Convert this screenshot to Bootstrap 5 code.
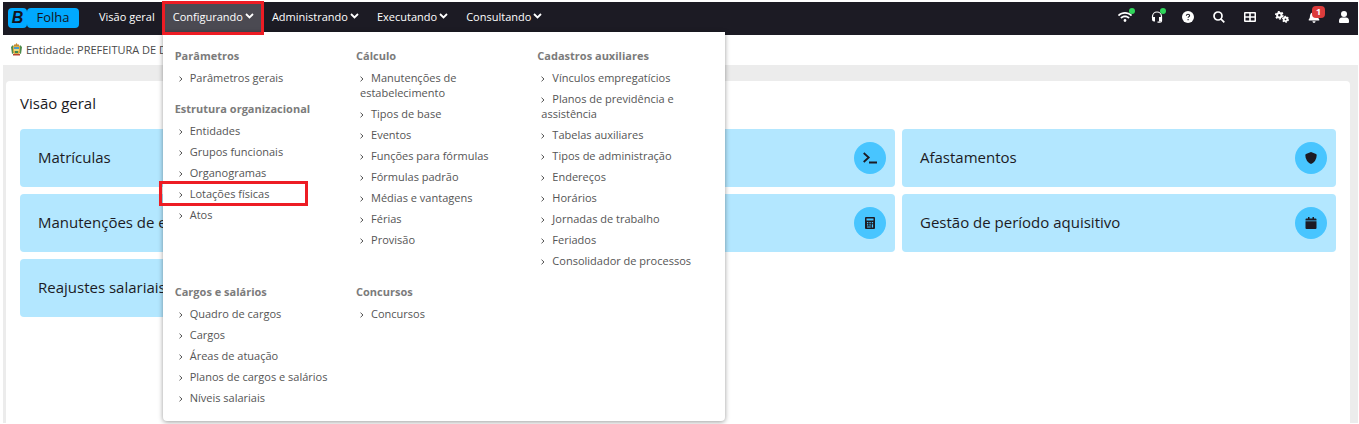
<!DOCTYPE html>
<html lang="pt-BR">
<head>
<meta charset="utf-8">
<meta name="viewport" content="width=device-width, initial-scale=1">
<title>Folha - Visão geral</title>
<link href="https://cdn.jsdelivr.net/npm/bootstrap@5.3.0/dist/css/bootstrap.min.css" rel="stylesheet">
<style>
  body { font-family: "Open Sans", "Noto Sans", sans-serif; font-size: 11px; line-height: 15px; color: #4a4a4a; padding: 2px 1px 1px 3px; background: #fff; }
  a { color: inherit; text-decoration: none; }
  button { font: inherit; }
  svg { display: block; fill: currentColor; }
  .topbar { background: #1c1b24; color: #fff; height: 33px; padding: 0 9px 0 5px; }
  .brand { padding-top: 6px; }
  .brand-b, .brand-name { background: #00a9ff; color: #14141c; height: 20px; border-radius: 4px; }
  .brand-b { width: 19px; font: italic bold 16px/19px "Liberation Sans", sans-serif; }
  .brand-name { width: 52px; font-size: 13px; line-height: 19px; }
  .topmenu { margin-left: 11px; }
  .topmenu .nav-link { color: #fff; padding: 0 9px 2px; height: 30px; border: 0; background: none; display: flex; align-items: center; gap: 2px; }
  .topmenu .nav-link.open { background: #4b4a52; }
  .marked { position: relative; }
  .marked::after { content: ""; position: absolute; inset: -1px -1px -3px -2px; border: 3px solid #ed1c24; z-index: 1100; pointer-events: none; }
  .marked.row-mark::after { inset: -2px auto -2px -20px; width: 149px; }
  .mega { position: absolute; top: 30px; left: -1px; width: 562px; z-index: 1050; background: #fff; border-radius: 0 0 4px 4px; box-shadow: 0 1px 5px rgba(0,0,0,.4); padding: 14px 6px 2px 12px; color: #555; }
  .mega-grid { display: grid; grid-template-columns: repeat(3, 1fr); }
  .mega h2 { font-size: 11px; line-height: 19px; font-weight: 700; color: #7b7b7b; margin: 0 0 2px; }
  .mega ul { margin: 0 0 11px; padding: 0 8px 0 4px; list-style: none; }
  .mega li { padding: 3px 0; }
  .mega li svg { display: inline-block; width: 4px; height: 6px; margin-right: 7px; fill: none; stroke: #555; vertical-align: 0; }
  .tools { gap: 19px; height: 30px; }
  .tools button { position: relative; border: 0; padding: 0; background: none; color: #fff; }
  .online { position: absolute; width: 6px; height: 6px; border-radius: 50%; background: #2fd65a; top: -3px; right: -3px; }
  .count { position: absolute; top: -5px; left: 4px; width: 13px; height: 12px; border-radius: 4px; background: #dc3c3c; font-size: 9px; line-height: 12px; font-weight: 700; }
  .entity { height: 30px; padding: 0 8px 2px; gap: 4px; }
  .stage { background: #ececec; padding: 16px 8px 0 3px; }
  .panel { background: #fff; border-radius: 4px 4px 0 0; padding: 11px 14px; }
  .panel h1 { font-size: 15px; line-height: 22px; color: #1c1b24; margin: 0 0 15px; }
  .tiles { display: grid; grid-template-columns: repeat(3, 1fr); gap: 7px; }
  .tile { background: #b3e7ff; border-radius: 4px; height: 58px; padding: 0 9px 0 18px; font-size: 15px; line-height: 22px; color: #1c1b24; }
  .tile-name { padding-bottom: 2px; }
  .disc { width: 32px; height: 32px; border-radius: 50%; background: #48c5ff; }
</style>
</head>
<body class="d-flex flex-column min-vh-100">
<svg class="d-none"><defs>
  <symbol id="chev" viewBox="0 0 9 6"><path d="M1 1l3.500 3.500L8 1" fill="none" stroke="#fff" stroke-width="1.800"/></symbol>
  <symbol id="arr" viewBox="0 0 4 6"><path d="M.5 .7L3 3 .5 5.300"/></symbol>
</defs></svg>
<header class="topbar d-flex align-items-start">
  <a href="#" class="brand d-flex text-center"><span class="brand-b">B</span><span class="brand-name">Folha</span></a>
  <nav class="topmenu d-flex">
    <a class="nav-link" href="#">Visão geral</a>
    <div class="marked">
      <button class="nav-link open" type="button" aria-expanded="true">Configurando <svg width="9" height="6"><use href="#chev"/></svg></button>
      <div class="mega"><div class="mega-grid">
        <div>
          <h2>Parâmetros</h2>
          <ul><li><a href="#"><svg><use href="#arr"/></svg>Parâmetros gerais</a></li></ul>
          <h2>Estrutura organizacional</h2>
          <ul>
            <li><a href="#"><svg><use href="#arr"/></svg>Entidades</a></li>
            <li><a href="#"><svg><use href="#arr"/></svg>Grupos funcionais</a></li>
            <li><a href="#"><svg><use href="#arr"/></svg>Organogramas</a></li>
            <li class="marked row-mark"><a href="#"><svg><use href="#arr"/></svg>Lotações físicas</a></li>
            <li><a href="#"><svg><use href="#arr"/></svg>Atos</a></li>
          </ul>
        </div>
        <div>
          <h2>Cálculo</h2>
          <ul>
            <li><a href="#"><svg><use href="#arr"/></svg>Manutenções de estabelecimento</a></li>
            <li><a href="#"><svg><use href="#arr"/></svg>Tipos de base</a></li>
            <li><a href="#"><svg><use href="#arr"/></svg>Eventos</a></li>
            <li><a href="#"><svg><use href="#arr"/></svg>Funções para fórmulas</a></li>
            <li><a href="#"><svg><use href="#arr"/></svg>Fórmulas padrão</a></li>
            <li><a href="#"><svg><use href="#arr"/></svg>Médias e vantagens</a></li>
            <li><a href="#"><svg><use href="#arr"/></svg>Férias</a></li>
            <li><a href="#"><svg><use href="#arr"/></svg>Provisão</a></li>
          </ul>
        </div>
        <div>
          <h2>Cadastros auxiliares</h2>
          <ul>
            <li><a href="#"><svg><use href="#arr"/></svg>Vínculos empregatícios</a></li>
            <li><a href="#"><svg><use href="#arr"/></svg>Planos de previdência e assistência</a></li>
            <li><a href="#"><svg><use href="#arr"/></svg>Tabelas auxiliares</a></li>
            <li><a href="#"><svg><use href="#arr"/></svg>Tipos de administração</a></li>
            <li><a href="#"><svg><use href="#arr"/></svg>Endereços</a></li>
            <li><a href="#"><svg><use href="#arr"/></svg>Horários</a></li>
            <li><a href="#"><svg><use href="#arr"/></svg>Jornadas de trabalho</a></li>
            <li><a href="#"><svg><use href="#arr"/></svg>Feriados</a></li>
            <li><a href="#"><svg><use href="#arr"/></svg>Consolidador de processos</a></li>
          </ul>
        </div>
        <div>
          <h2>Cargos e salários</h2>
          <ul>
            <li><a href="#"><svg><use href="#arr"/></svg>Quadro de cargos</a></li>
            <li><a href="#"><svg><use href="#arr"/></svg>Cargos</a></li>
            <li><a href="#"><svg><use href="#arr"/></svg>Áreas de atuação</a></li>
            <li><a href="#"><svg><use href="#arr"/></svg>Planos de cargos e salários</a></li>
            <li><a href="#"><svg><use href="#arr"/></svg>Níveis salariais</a></li>
          </ul>
        </div>
        <div>
          <h2>Concursos</h2>
          <ul><li><a href="#"><svg><use href="#arr"/></svg>Concursos</a></li></ul>
        </div>
      </div></div>
    </div>
    <button class="nav-link" type="button">Administrando <svg width="9" height="6"><use href="#chev"/></svg></button>
    <button class="nav-link" type="button">Executando <svg width="9" height="6"><use href="#chev"/></svg></button>
    <button class="nav-link" type="button">Consultando <svg width="9" height="6"><use href="#chev"/></svg></button>
  </nav>
  <div class="tools d-flex align-items-center ms-auto">
    <button type="button" aria-label="Conexão"><svg width="14" height="12" viewBox="0 0 640 512"><path d="M634.910 154.880C457.740-8.990 182.190-8.930 5.090 154.880c-6.660 6.160-6.790 16.590-.35 22.980l34.240 33.970c6.140 6.100 16.020 6.230 22.400.38 145.920-133.680 371.300-133.710 517.250 0 6.380 5.850 16.260 5.710 22.400-.38l34.240-33.970c6.430-6.390 6.300-16.820-.36-22.980zM320 352c-35.350 0-64 28.650-64 64s28.650 64 64 64 64-28.650 64-64-28.650-64-64-64zm202.670-83.590c-115.260-101.930-290.210-101.820-405.340 0-6.900 6.100-7.120 16.690-.57 23.150l34.440 33.990c6 5.920 15.660 6.320 22.050.8 83.950-72.570 209.740-72.410 293.490 0 6.390 5.520 16.050 5.130 22.050-.8l34.440-33.990c6.560-6.460 6.330-17.060-.56-23.150z"/></svg><span class="online"></span></button>
    <button type="button" aria-label="Suporte"><svg width="12" height="12" viewBox="0 0 12 12"><path d="M1.500 7V5.500a4.500 4.500 0 019 0V10q0 1.200-1.500 1.200H6.500" fill="none" stroke="#fff" stroke-width="1.200"/><path d="M2 6h2v4.500H3Q1 10.500 1 8.500V7q0-1 1-1zM8 6h2q1 0 1 1v1.500q0 2-2 2H8z"/></svg><span class="online"></span></button>
    <button type="button" aria-label="Ajuda"><svg width="12" height="12" viewBox="0 0 12 12"><circle cx="6" cy="6" r="6"/><path d="M4.300 4.700q.2-1.500 1.700-1.500 1.600 0 1.600 1.300 0 .7-.8 1.200-.7.400-.7 1M6.100 8v1.300" fill="none" stroke="#1c1b24" stroke-width="1.100"/></svg></button>
    <button type="button" aria-label="Pesquisar"><svg width="12" height="12" viewBox="0 0 12 12"><path d="M7.800 7.800l3.500 3.500M9 5A4 4 0 111 5a4 4 0 018 0z" fill="none" stroke="#fff" stroke-width="1.700"/></svg></button>
    <button type="button" aria-label="Aplicações"><svg width="12" height="12" viewBox="0 0 12 12"><path fill-rule="evenodd" d="M1 1h10q1 0 1 1v8q0 1-1 1H1q-1 0-1-1V2q0-1 1-1zM1.500 2.500v2.700h3.700V2.500zm5.300 0v2.700h3.700V2.500zM1.500 6.800v2.700h3.700V6.800zm5.300 0v2.700h3.700V6.800z"/></svg></button>
    <button type="button" aria-label="Configurações"><svg width="14" height="12" viewBox="0 0 14 12"><g fill="none" stroke="#fff"><circle cx="4.300" cy="4.300" r="2.200" stroke-width="2"/><circle cx="4.300" cy="4.300" r="3.600" stroke-width="1.500" stroke-dasharray="1.900 1.870"/><circle cx="10.500" cy="8.300" r="1.800" stroke-width="1.800"/><circle cx="10.500" cy="8.300" r="2.900" stroke-width="1.200" stroke-dasharray="1.600 1.436"/></g></svg></button>
    <button type="button" aria-label="Notificações"><svg width="12" height="12" viewBox="0 0 12 12"><path d="M6 0q.8 0 .8 1Q10 2 10 5q0 2.500 1.300 3.600.4.900-.5.900H1.200Q.3 9.500.7 8.600 2 7.500 2 5q0-3 3.200-4 0-1 .8-1zM4.400 10.300h3.200q-.2 1.600-1.600 1.600t-1.600-1.600z"/></svg><span class="count">1</span></button>
    <button type="button" aria-label="Usuário"><svg width="10" height="12" viewBox="0 0 10 12"><circle cx="5" cy="3" r="3"/><path d="M0 10q0-3.500 3-3.500h4q3 0 3 3.500v1q0 1-1 1H1q-1 0-1-1z"/></svg></button>
  </div>
</header>
<div class="entity d-flex align-items-center">
  <svg width="11" height="13" viewBox="0 0 11 13"><path d="M0 4l2-2 1 2v6l-2 1zM11 4L9 2 8 4v6l2 1z" fill="#4d8b4c"/><path d="M3 1l1 1 1.500-2L7 2l1-1v2H3z" fill="#c58a35"/><path d="M2 3h7v5q0 3-3.500 4Q2 11 2 8z" fill="#dcae45"/><path d="M3 4h5v2H3z" fill="#4c9bc8"/><path d="M3 6h5v2H3z" fill="#e9dc7b"/><path d="M4 8h3v2H4z" fill="#3e8750"/><path d="M2 11h7v1.500H2z" fill="#b74532"/></svg>
  <span>Entidade: PREFEITURA DE DI</span>
</div>
<main class="stage d-flex flex-column flex-grow-1">
  <section class="panel flex-grow-1">
    <h1 class="fw-normal">Visão geral</h1>
    <div class="tiles">
      <a href="#" class="tile d-flex align-items-center"><span class="tile-name">Matrículas</span></a>
      <a href="#" class="tile d-flex align-items-center justify-content-end" aria-label="Terminal"><span class="disc d-flex align-items-center justify-content-center"><svg width="14" height="12" viewBox="0 0 14 12"><path d="M.7 1l5 4.500-5 4.500M6 10.500h8" fill="none" stroke="#1c1b24" stroke-width="1.800"/></svg></span></a>
      <a href="#" class="tile d-flex align-items-center justify-content-between"><span class="tile-name">Afastamentos</span><span class="disc d-flex align-items-center justify-content-center"><svg width="12" height="12" viewBox="0 0 12 12"><path d="M6 0l5 2q.7.300.7 1Q11.500 9.500 6 12 .5 9.500.3 3q0-.7.7-1z"/></svg></span></a>
      <a href="#" class="tile d-flex align-items-center"><span class="tile-name">Manutenções de e</span></a>
      <a href="#" class="tile d-flex align-items-center justify-content-end" aria-label="Calculadora"><span class="disc d-flex align-items-center justify-content-center"><svg width="10" height="12" viewBox="0 0 10 12"><path fill-rule="evenodd" d="M1 0h8q1 0 1 1v10q0 1-1 1H1q-1 0-1-1V1q0-1 1-1zM1.500 1.500v2h7v-2zM2 5v1.300h1.300V5zm2.400 0v1.300h1.300V5zm2.400 0v1.300h1.300V5zM2 7.200v1.300h1.300V7.200zm2.400 0v1.300h1.300V7.200zm2.400 0v3.300h1.300V7.200zM2 9.400v1.100h3.700V9.400z"/></svg></span></a>
      <a href="#" class="tile d-flex align-items-center justify-content-between"><span class="tile-name">Gestão de período aquisitivo</span><span class="disc d-flex align-items-center justify-content-center"><svg width="12" height="12" viewBox="0 0 12 12"><path d="M3 0h1.500v1.500h3V0H9v1.500h1.500q1 0 1 1v1H.5v-1q0-1 1-1H3zM.5 4.300h11V11q0 1-1 1h-9q-1 0-1-1z"/></svg></span></a>
      <a href="#" class="tile d-flex align-items-center"><span class="tile-name">Reajustes salariais</span></a>
    </div>
  </section>
</main>
<script src="https://cdn.jsdelivr.net/npm/bootstrap@5.3.0/dist/js/bootstrap.bundle.min.js"></script>
</body>
</html>
